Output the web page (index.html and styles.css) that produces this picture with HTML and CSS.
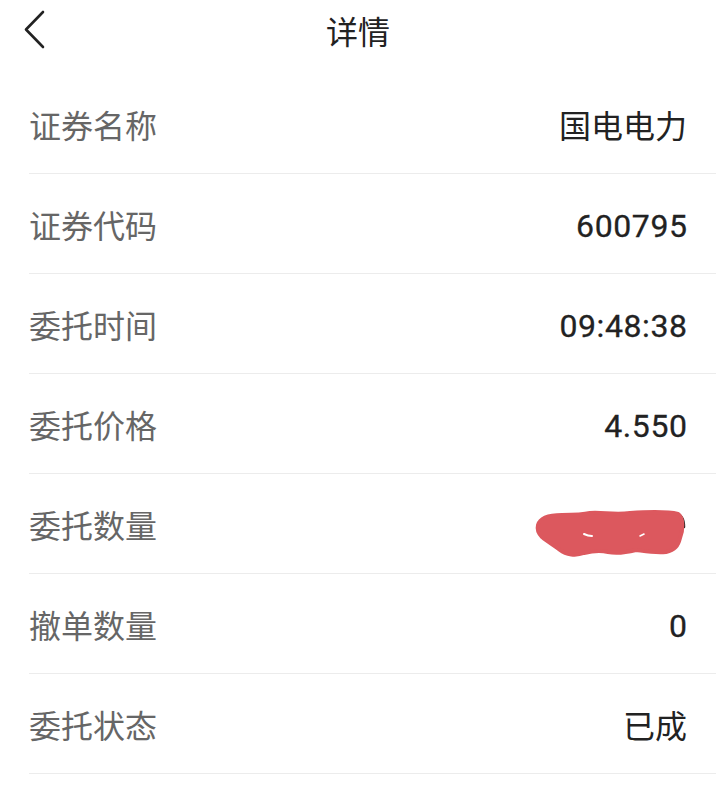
FILE: index.html
```html
<!DOCTYPE html>
<html lang="zh-CN">
<head>
    <meta charset="utf-8">
    <title>详情</title>
    <link rel="stylesheet" href="styles.css">
</head>
<body>
    <header class="topbar">
        <a class="back" href="#">
            <svg width="24" height="40" viewBox="0 0 24 40">
                <path d="M20 2 L3 19.5 L20 37" fill="none" stroke="#222" stroke-width="2.6" stroke-linecap="round" stroke-linejoin="round"/>
            </svg>
        </a>
        <h1 class="title">详情</h1>
    </header>

    <ul class="detail">
        <li class="row"><span class="label">证券名称</span><span class="value">国电电力</span></li>
        <li class="row"><span class="label">证券代码</span><span class="value num">600795</span></li>
        <li class="row"><span class="label">委托时间</span><span class="value num">09:48:38</span></li>
        <li class="row"><span class="label">委托价格</span><span class="value num">4.550</span></li>
        <li class="row">
            <span class="label">委托数量</span>
            <!-- number painted over in the screenshot -->
            <svg class="masked" width="157" height="62" viewBox="0 0 157 62">
                <path d="M146 14 Q154 15 154 27" fill="none" stroke="#222" stroke-width="2.5" stroke-linecap="round"/>
                <path d="M8 25 C10 18 20 15 32 15 C42 15 52 15 60 13 C72 12 84 15 100 13 C116 12 136 11 148 14 C154 18 153 30 150 38 C148 46 145 50 136 52 C124 53 114 51 106 50 C98 52 88 54 78 52 C70 50 62 51 54 53 C46 56 36 55 30 50 C24 45 18 42 12 37 C8 33 7 29 8 25 Z" fill="#dc585e" stroke="#dc585e" stroke-width="4" stroke-linejoin="round"/>
                <path d="M54 34 Q58 36 62 36" fill="none" stroke="#fff" stroke-width="2" stroke-linecap="round"/>
                <path d="M110 36 L114 34" fill="none" stroke="#fff" stroke-width="1.6" stroke-linecap="round"/>
            </svg>
        </li>
        <li class="row"><span class="label">撤单数量</span><span class="value num">0</span></li>
        <li class="row"><span class="label">委托状态</span><span class="value">已成</span></li>
    </ul>
</body>
</html>
```

FILE: styles.css
```css
* {
    margin: 0;
    padding: 0;
    box-sizing: border-box;
}

html,
body {
    width: 100%;
    height: 100%;
}

body {
    background-color: #fff;
    font-family: Roboto, "Noto Sans CJK SC", sans-serif;
    color: #222;
}

.topbar {
    height: 74px;
    display: flex;
    align-items: center;
    justify-content: center;
    position: relative;
}

.back {
    position: absolute;
    left: 23px;
    top: 10px;
    display: block;
    width: 24px;
    height: 40px;
}

.title {
    font-size: 32px;
    font-weight: normal;
    color: #222;
    margin-top: -14px;
}

.detail {
    list-style: none;
}

.row {
    height: 100px;
    margin-left: 29px;
    padding-right: 29px;
    display: flex;
    align-items: center;
    justify-content: space-between;
    border-bottom: 1px solid #ececec;
    font-size: 32px;
}

.label {
    color: #666;
}

.value {
    color: #222;
}

.num {
    padding-top: 4px;
    letter-spacing: 0.6px;
    margin-right: -0.6px;
    -webkit-text-stroke: 0.3px #222;
}

.masked {
    display: block;
    margin-top: 14px;
}
```
